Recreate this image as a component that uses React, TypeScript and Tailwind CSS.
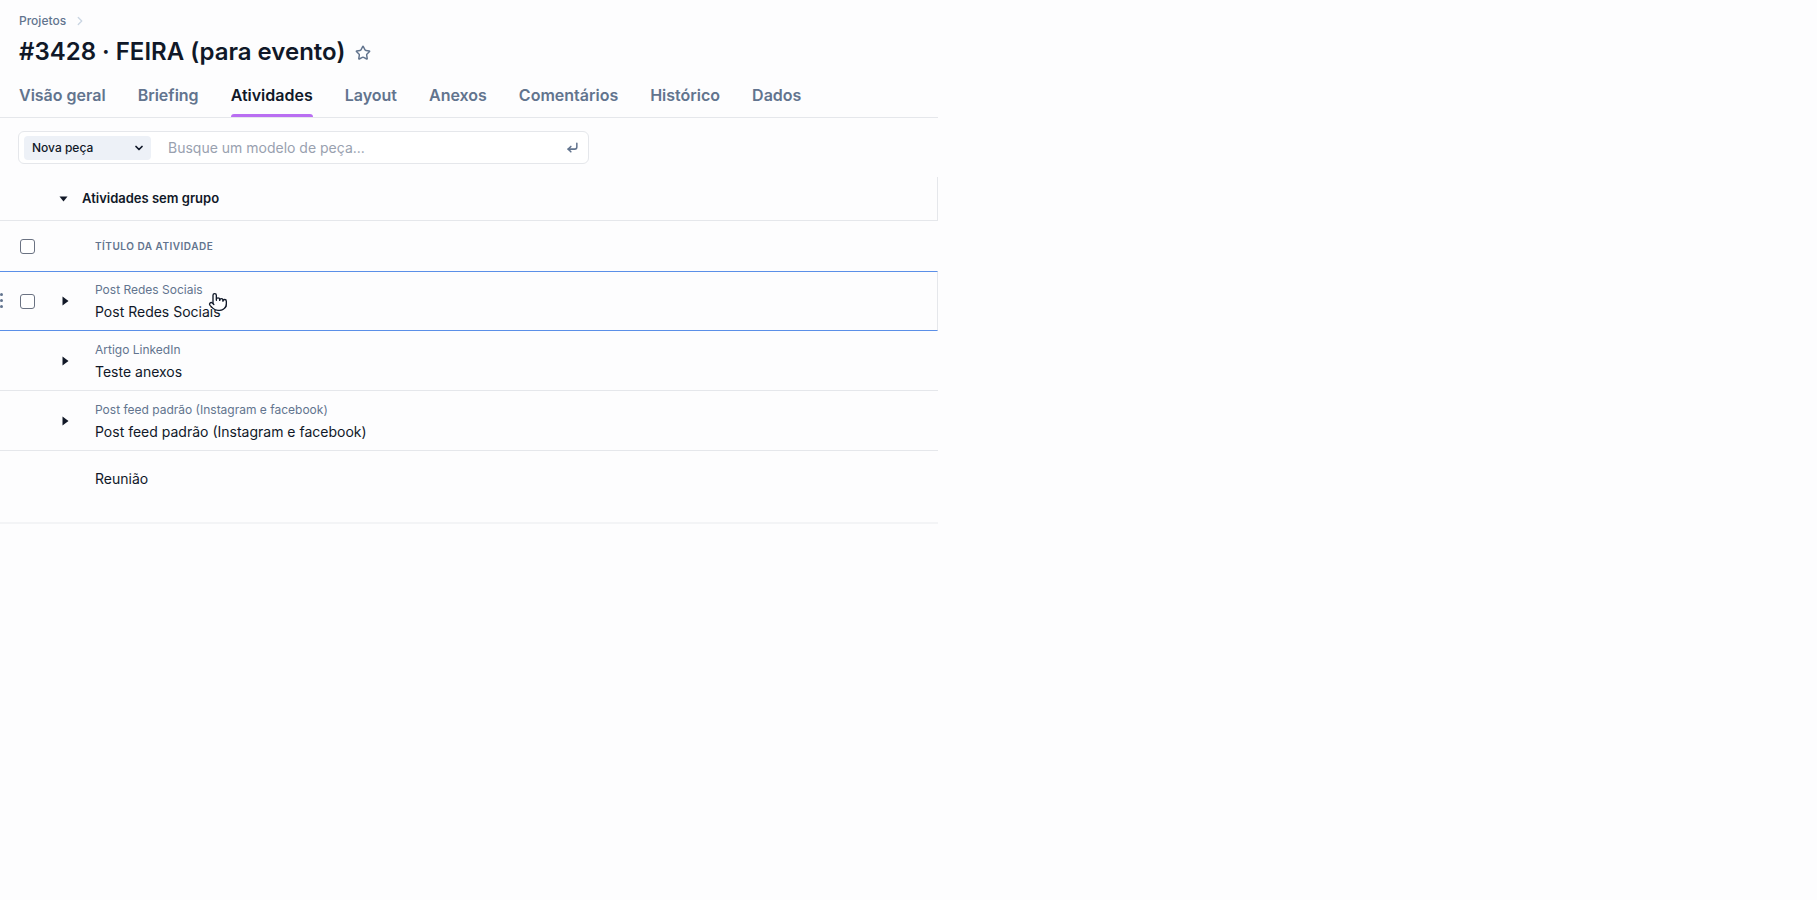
import React from "react";
import { ChevronRight, Star, ChevronDown, CornerDownLeft, Pointer } from "lucide-react";

const tabs = ["Visão geral", "Briefing", "Atividades", "Layout", "Anexos", "Comentários", "Histórico", "Dados"];

type Activity = {
  model?: string;
  title: string;
  expandable: boolean;
};

const activities: Activity[] = [
  { model: "Post Redes Sociais", title: "Post Redes Sociais", expandable: true },
  { model: "Artigo LinkedIn", title: "Teste anexos", expandable: true },
  {
    model: "Post feed padrão (Instagram e facebook)",
    title: "Post feed padrão (Instagram e facebook)",
    expandable: true,
  },
  { title: "Reunião", expandable: false },
];

function Checkbox() {
  return <div className="h-[15px] w-[15px] rounded-[3px] border border-gray-500 bg-white" />;
}

function CaretRight() {
  return (
    <svg width="7" height="10" viewBox="0 0 7 10">
      <path d="M0.5 0.5 L6.5 5 L0.5 9.5 Z" fill="#111827" />
    </svg>
  );
}

function CaretDown() {
  return (
    <svg width="9" height="6" viewBox="0 0 9 6">
      <path d="M0.5 0.5 L8.5 0.5 L4.5 5.5 Z" fill="#111827" />
    </svg>
  );
}

function ActivityRow({ item, active }: { item: Activity; active: boolean }) {
  return (
    <div
      className={
        active
          ? "relative flex h-[60px] items-center border-y border-r border-[#5b8fe8] border-r-gray-200"
          : item.model
          ? "flex h-[60px] items-center border-b border-gray-200"
          : "flex h-[73px] items-start border-b-2 border-gray-100"
      }
    >
      {active && (
        <div className="absolute left-0 top-[21px] flex flex-col gap-[3px]">
          <span className="h-[3px] w-[3px] rounded-full bg-slate-500" />
          <span className="h-[3px] w-[3px] rounded-full bg-slate-500" />
          <span className="h-[3px] w-[3px] rounded-full bg-slate-500" />
        </div>
      )}
      <div className="flex w-[52px] shrink-0 pl-[20px]">{active && <Checkbox />}</div>
      <div className="flex w-[43px] shrink-0 pl-[10px]">{item.expandable && <CaretRight />}</div>
      {item.model ? (
        <div className="flex flex-col pt-[2px]">
          <span className="text-xs leading-4 text-slate-500">{item.model}</span>
          <span className="mt-1 text-sm leading-5 text-gray-900">{item.title}</span>
        </div>
      ) : (
        <div className="pt-[18px] text-sm leading-5 text-gray-900">{item.title}</div>
      )}
    </div>
  );
}

export default function App() {
  return (
    <div className="min-h-screen bg-[#fdfdfe] font-['Inter',sans-serif]">
      <div className="relative w-[938px] pt-[13px]">
        {/* cabeçalho */}
        <div className="px-[19px]">
          <div className="flex h-4 items-center gap-[7px] text-xs font-medium text-slate-500">
            Projetos
            <ChevronRight size={14} className="text-slate-300" strokeWidth={2.2} />
          </div>
          <div className="mt-[7px] flex h-8 items-center gap-2.5">
            <h1 className="text-2xl font-semibold text-gray-900">#3428 · FEIRA (para evento)</h1>
            <Star size={16} strokeWidth={2.2} className="mt-[2px] text-slate-500" />
          </div>
        </div>

        {/* abas */}
        <div className="mt-[15px] flex gap-8 border-b border-gray-200 px-[19px]">
          {tabs.map((t) => (
            <div key={t} className="relative pb-[10px]">
              <span
                className={
                  t === "Atividades"
                    ? "text-base leading-6 font-semibold text-gray-900"
                    : "text-base leading-6 font-semibold text-slate-500"
                }
              >
                {t}
              </span>
              {t === "Atividades" && (
                <div className="absolute bottom-0 left-0 right-0 h-[3px] rounded-t-full bg-[#b96ef2]" />
              )}
            </div>
          ))}
        </div>

        {/* busca */}
        <div className="mx-[18px] mt-[13px] flex h-[33px] w-[571px] items-center rounded-md border border-gray-200 bg-white pl-[5px] pr-[9px]">
          <div className="flex h-6 w-[127px] items-center justify-between rounded bg-[#edf1f7] pl-[8px] pr-[6px]">
            <span className="text-xs font-medium text-gray-900">Nova peça</span>
            <ChevronDown size={12} strokeWidth={3.5} className="text-gray-900" />
          </div>
          <span className="ml-[17px] flex-1 text-sm text-gray-400">Busque um modelo de peça...</span>
          <CornerDownLeft size={13} strokeWidth={2.8} className="text-slate-500" />
        </div>

        {/* grupo */}
        <div className="mt-[13px]">
          <div className="flex h-[44px] items-center border-b border-r border-gray-200">
            <div className="w-[59px] shrink-0" />
            <CaretDown />
            <span className="ml-[14px] text-[13px] font-semibold text-gray-900">Atividades sem grupo</span>
          </div>
          <div className="flex h-[50px] items-center">
            <div className="flex w-[52px] shrink-0 pl-[20px]">
              <Checkbox />
            </div>
            <div className="w-[43px] shrink-0" />
            <span className="text-[10px] font-semibold uppercase tracking-wider text-slate-500">
              Título da atividade
            </span>
          </div>
          {activities.map((a, i) => (
            <ActivityRow key={a.title + i} item={a} active={i === 0} />
          ))}
        </div>

        <Pointer
          size={20}
          strokeWidth={1.6}
          fill="#ffffff"
          className="absolute left-[208px] top-[292px] text-gray-900"
        />
      </div>
    </div>
  );
}
